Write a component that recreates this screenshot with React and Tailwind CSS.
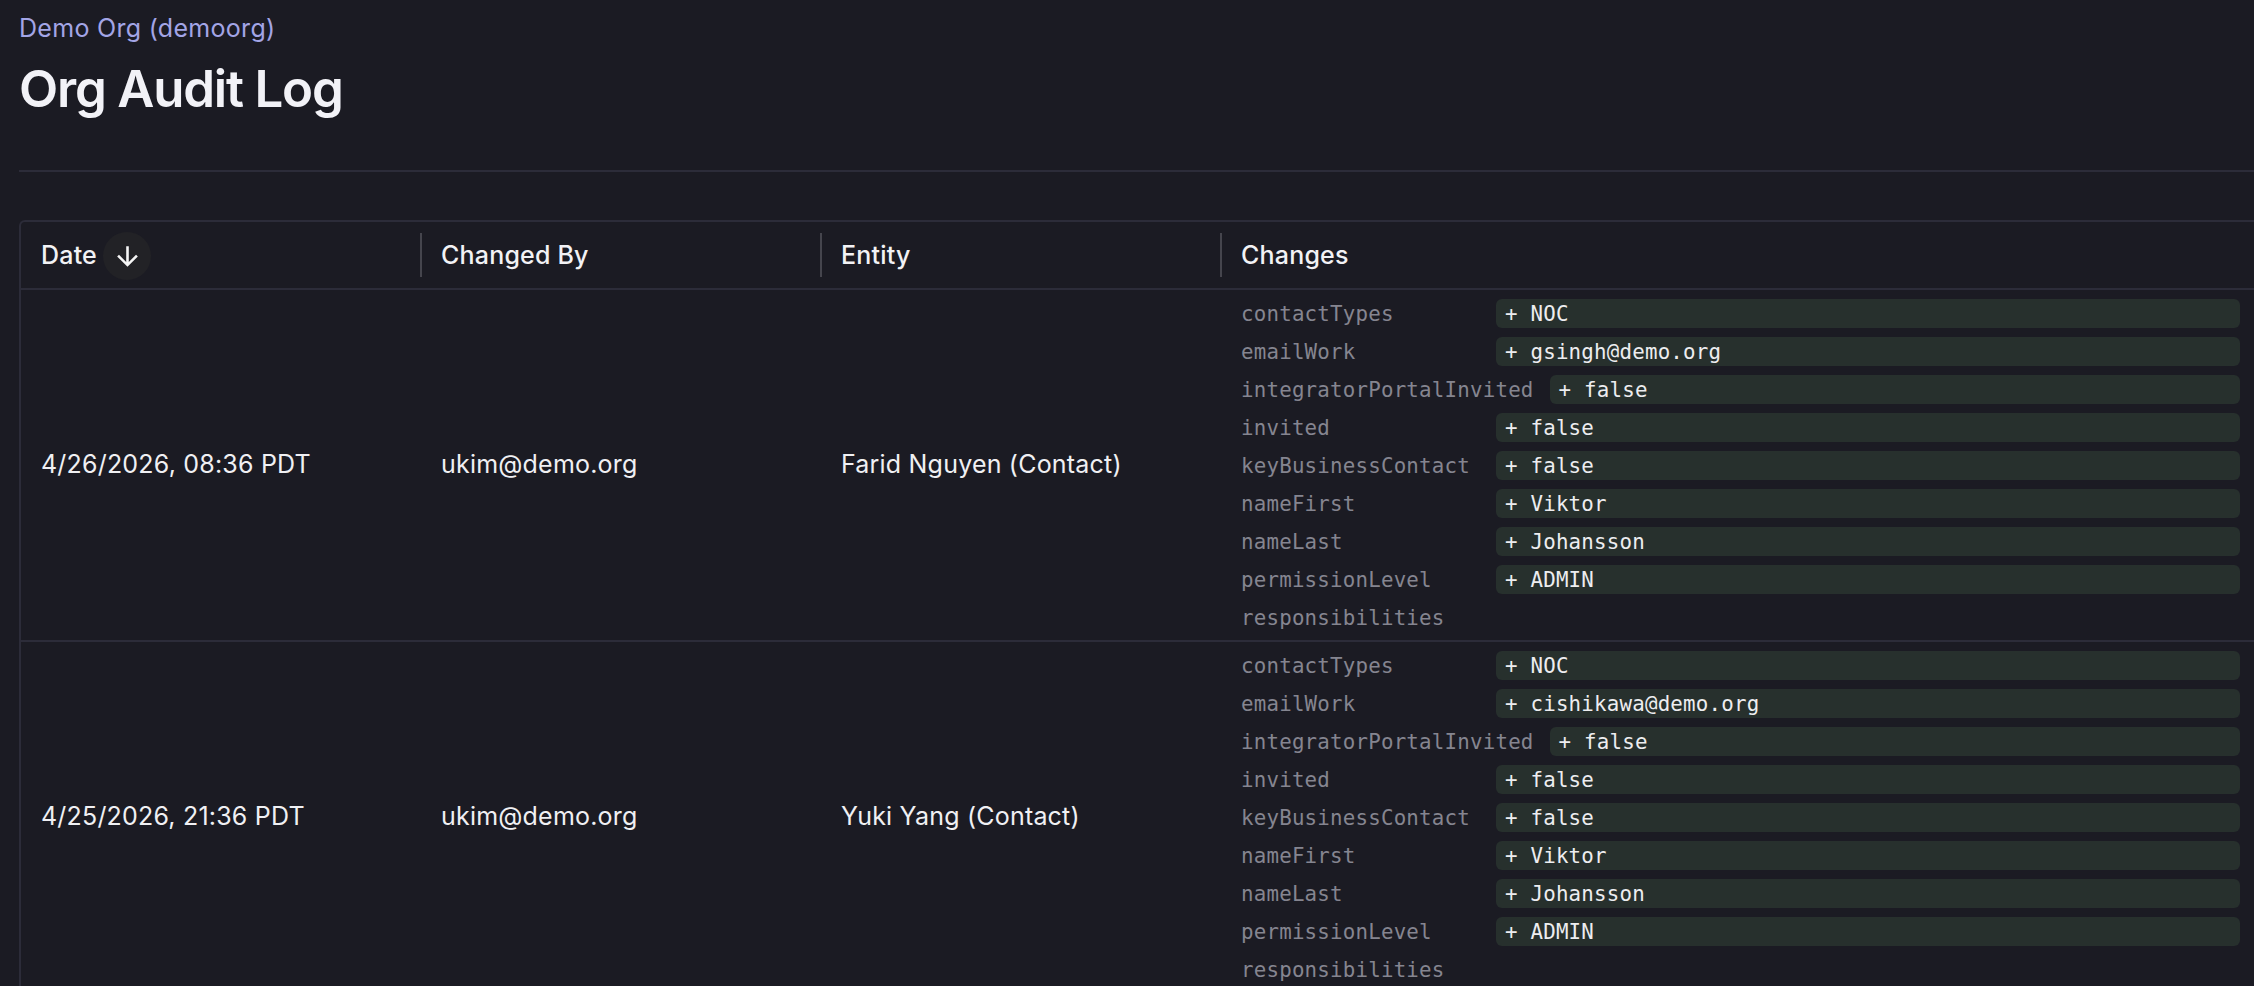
import React from 'react';

const rows = [
  {
    date: '4/26/2026, 08:36 PDT',
    by: 'ukim@demo.org',
    entity: 'Farid Nguyen (Contact)',
    email: 'gsingh@demo.org',
  },
  {
    date: '4/25/2026, 21:36 PDT',
    by: 'ukim@demo.org',
    entity: 'Yuki Yang (Contact)',
    email: 'cishikawa@demo.org',
  },
];

function changesFor(row) {
  return [
    ['contactTypes', 'NOC'],
    ['emailWork', row.email],
    ['integratorPortalInvited', 'false'],
    ['invited', 'false'],
    ['keyBusinessContact', 'false'],
    ['nameFirst', 'Viktor'],
    ['nameLast', 'Johansson'],
    ['permissionLevel', 'ADMIN'],
    ['responsibilities', null],
  ];
}

const mono = { fontFamily: '"DejaVu Sans Mono", "Liberation Mono", monospace' };

function SortIcon() {
  return (
    <svg width="31" height="31" viewBox="0 0 24 24" fill="currentColor">
      <path d="M20 12l-1.41-1.41L13 16.17V4h-2v12.17l-5.58-5.59L4 12l8 8 8-8z" />
    </svg>
  );
}

function HeaderCell({ label, first, width, children }) {
  return (
    <div className={`flex items-center shrink-0 ${width}`}>
      {!first && <div className="w-[2px] h-[44px] bg-[#45454d] shrink-0" />}
      <div className={`flex items-center pt-[2px] ${first ? 'pl-[20px]' : 'pl-[19px]'}`}>
        <span className="text-[25px] tracking-[0.2px] font-medium text-[#f2f2f5]">{label}</span>
        {children}
      </div>
    </div>
  );
}

function ChangeList({ items }) {
  return (
    <div className="flex flex-col gap-[9px] pt-[9px] pb-[8px] pl-[21px] pr-[21px] w-[1041px] shrink-0" style={mono}>
      {items.map(([key, val]) => (
        <div key={key} className="flex items-center gap-[16px] h-[29px]">
          <span className="min-w-[239px] shrink-0 pt-[3px] text-[20.8px] text-[#858590] whitespace-nowrap">{key}</span>
          {val !== null && (
            <span className="flex-1 h-[29px] flex items-center rounded-[6px] bg-[#27302d] pl-[9px] pt-[3px] text-[20.8px] text-[#ededf0] whitespace-pre">
              {'+ ' + val}
            </span>
          )}
        </div>
      ))}
    </div>
  );
}

export default function App() {
  return (
    <div
      className="h-screen w-full overflow-hidden bg-[#1b1b23] text-[#f2f2f5]"
      style={{ fontFamily: 'Inter, "Noto Sans", sans-serif' }}
    >
      <div className="pl-[19px] pt-[11px]">
        <div className="text-[25px] tracking-[0.3px] leading-[34px] text-[#a3a5e6]">Demo Org (demoorg)</div>
        <h1 className="mt-[17px] text-[51px] tracking-[-1.2px] leading-[54px] font-semibold text-[#f2f2f7]">Org Audit Log</h1>
        <div className="mt-[54px] h-[2px] bg-[#2c2c39]" />

        <div className="mt-[48px] w-[2300px] border-t-2 border-l-2 border-[#2c2c39] rounded-tl-[6px]">
          <div className="flex h-[68px] border-b-2 border-[#2c2c39]">
            <HeaderCell label="Date" first width="w-[399px]">
              <span className="ml-[6px] w-[48px] h-[48px] rounded-full bg-[#222226] flex items-center justify-center text-[#f5f5f5]">
                <SortIcon />
              </span>
            </HeaderCell>
            <HeaderCell label="Changed By" width="w-[400px]" />
            <HeaderCell label="Entity" width="w-[400px]" />
            <HeaderCell label="Changes" width="w-[1041px]" />
          </div>

          {rows.map((row) => (
            <div key={row.date} className="flex border-b-2 border-[#2c2c39] text-[25px] tracking-[0.2px] text-[#f0f0f3]">
              <div className="w-[399px] shrink-0 pl-[20px] flex items-center">{row.date}</div>
              <div className="w-[400px] shrink-0 pl-[21px] flex items-center">{row.by}</div>
              <div className="w-[400px] shrink-0 pl-[21px] flex items-center">{row.entity}</div>
              <ChangeList items={changesFor(row)} />
            </div>
          ))}
        </div>
      </div>
    </div>
  );
}
